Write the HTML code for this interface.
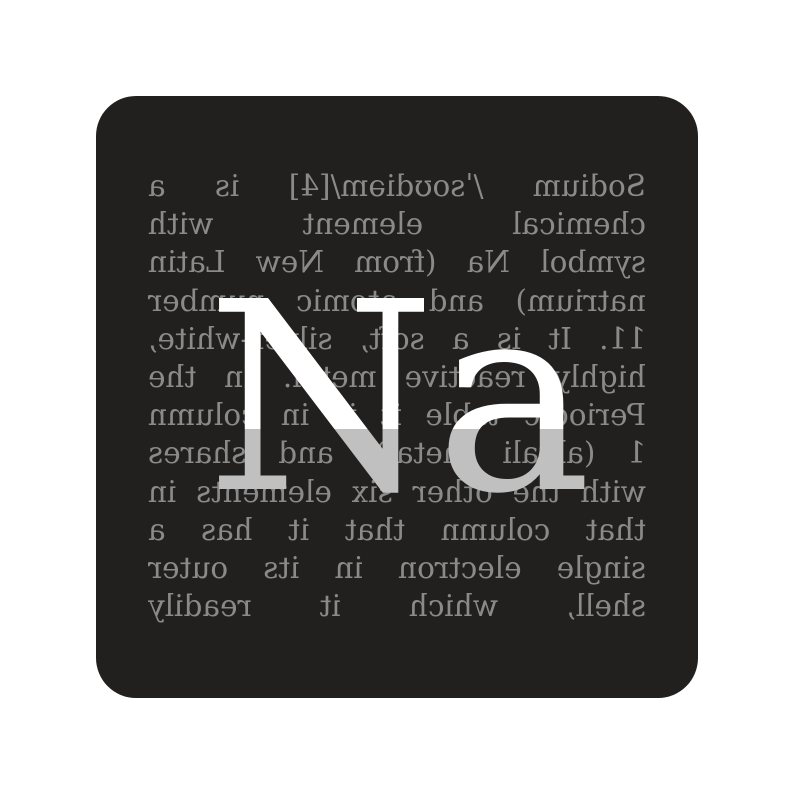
<!DOCTYPE html>
<html><head><meta charset="utf-8"><style>
html,body{margin:0;padding:0;background:#fff;width:793px;height:793px;overflow:hidden}
.box{position:absolute;left:96px;top:96px;width:602px;height:602px;background:#21201f;border-radius:40px;overflow:hidden}
.txt{position:absolute;left:52px;top:71px;width:498px;transform:scaleX(-1);font-family:"DejaVu Serif","Liberation Serif",serif;font-size:29.5px;line-height:38.2px;color:#8a8a8a}
.txt div{text-align:justify;text-align-last:justify;white-space:nowrap;height:38.2px}
.na{position:absolute;left:108px;top:172px;width:390px;text-align:center;font-family:"DejaVu Serif","Liberation Serif",serif;font-size:262px;line-height:262px;background:linear-gradient(to bottom,#fff 0,#fff 161px,#c0c0c0 161px);-webkit-background-clip:text;background-clip:text;color:transparent}
</style></head><body>
<div class="box">
<div class="txt">
<div>Sodium /ˈsoʊdiəm/[4] is a</div>
<div>chemical element with</div>
<div>symbol Na (from New Latin</div>
<div>natrium) and atomic number</div>
<div>11. It is a soft, silver-white,</div>
<div>highly reactive metal. In the</div>
<div>Periodic table it is in column</div>
<div>1 (alkali metal), and shares</div>
<div>with the other six elements in</div>
<div>that column that it has a</div>
<div>single electron in its outer</div>
<div>shell, which it readily</div>
</div>
<div class="na">Na</div>
</div>
</body></html>
